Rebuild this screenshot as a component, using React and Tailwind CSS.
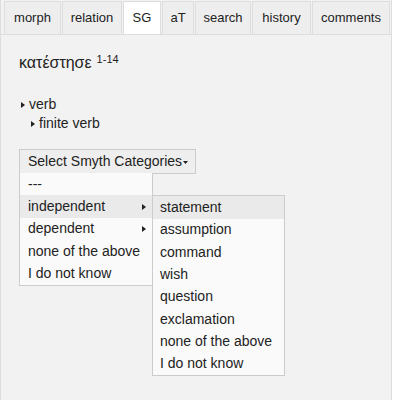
import React from "react";

const tabs = [
  { label: "morph", w: "w-[57px]" },
  { label: "relation", w: "w-[60px]" },
  { label: "SG", w: "w-[38px]", active: true },
  { label: "aT", w: "w-[32px]" },
  { label: "search", w: "w-[56px]" },
  { label: "history", w: "w-[59px]" },
  { label: "comments", w: "w-[78px]" },
];

const menuItems = [
  { label: "---" },
  { label: "independent", sub: true, hover: true },
  { label: "dependent", sub: true },
  { label: "none of the above" },
  { label: "I do not know" },
];

const subItems = [
  "statement",
  "assumption",
  "command",
  "wish",
  "question",
  "exclamation",
  "none of the above",
  "I do not know",
];

const Arrow = ({ className }) => (
  <svg className={className} width="4" height="6" viewBox="0 0 4 6">
    <path d="M0 0L4 3L0 6Z" fill="#222" />
  </svg>
);

const App = () => {
  return (
    <div
      className="w-[392px] min-h-[400px] bg-[#f2f2f2] border-x border-[#ddd] text-[#222]"
      style={{ fontFamily: '"Liberation Sans", Arial, sans-serif' }}
    >
      {/* tabs */}
      <div className="flex gap-px pl-[3px] pt-px border-b border-[#ddd]">
        {tabs.map((t) => (
          <div
            key={t.label}
            className={`${t.w} h-[33px] flex items-center justify-center border-x border-t border-[#ddd] text-[13px] ${
              t.active ? "bg-white" : "bg-[#eee]"
            }`}
          >
            {t.label}
          </div>
        ))}
      </div>

      <div className="pl-[18px]">
        <div className="mt-[18px] text-[16px] leading-[20px] flex items-start">
          <span>κατέστησε</span>
          <span className="ml-[5px] text-[11px] leading-[14px] -mt-[1px]">1-14</span>
        </div>

        <div className="mt-[22px] text-[14px] leading-[19px]">
          <div className="flex items-center">
            <Arrow className="ml-[2px] mr-[4px]" />
            <span>verb</span>
          </div>
          <div className="flex items-center pl-[10px]">
            <Arrow className="ml-[2px] mr-[4px]" />
            <span>finite verb</span>
          </div>
        </div>

        {/* dropdown */}
        <div className="relative mt-[16px] w-fit">
          <div className="w-[177px] h-[25px] flex items-center pl-[8px] bg-[#eee] border border-[#ccc] text-[14px]">
            <span>Select Smyth Categories</span>
            <svg className="ml-[1px] mt-[1px]" width="5" height="3" viewBox="0 0 5 3">
              <path d="M0 0H5L2.5 3Z" fill="#222" />
            </svg>
          </div>

          <div className="absolute left-0 top-[24px] w-[134px] bg-[#fafafa] border border-[#ccc] border-t-0 text-[14px]">
            {menuItems.map((m) => (
              <div
                key={m.label}
                className={`relative h-[22.4px] flex items-center pl-[8px] pr-[6px] ${
                  m.hover ? "bg-[#eaeaea]" : ""
                }`}
              >
                <span className="flex-1">{m.label}</span>
                {m.sub && <Arrow className="" />}
                {m.hover && (
                  <div className="absolute left-[132px] top-0 w-[133px] bg-[#fafafa] border border-[#ccc] z-10">
                    {subItems.map((s, i) => (
                      <div
                        key={s}
                        className={`h-[22.3px] flex items-center pl-[7px] ${
                          i === 0 ? "bg-[#eaeaea]" : ""
                        }`}
                      >
                        {s}
                      </div>
                    ))}
                  </div>
                )}
              </div>
            ))}
          </div>
        </div>
      </div>
    </div>
  );
};

export default App;
